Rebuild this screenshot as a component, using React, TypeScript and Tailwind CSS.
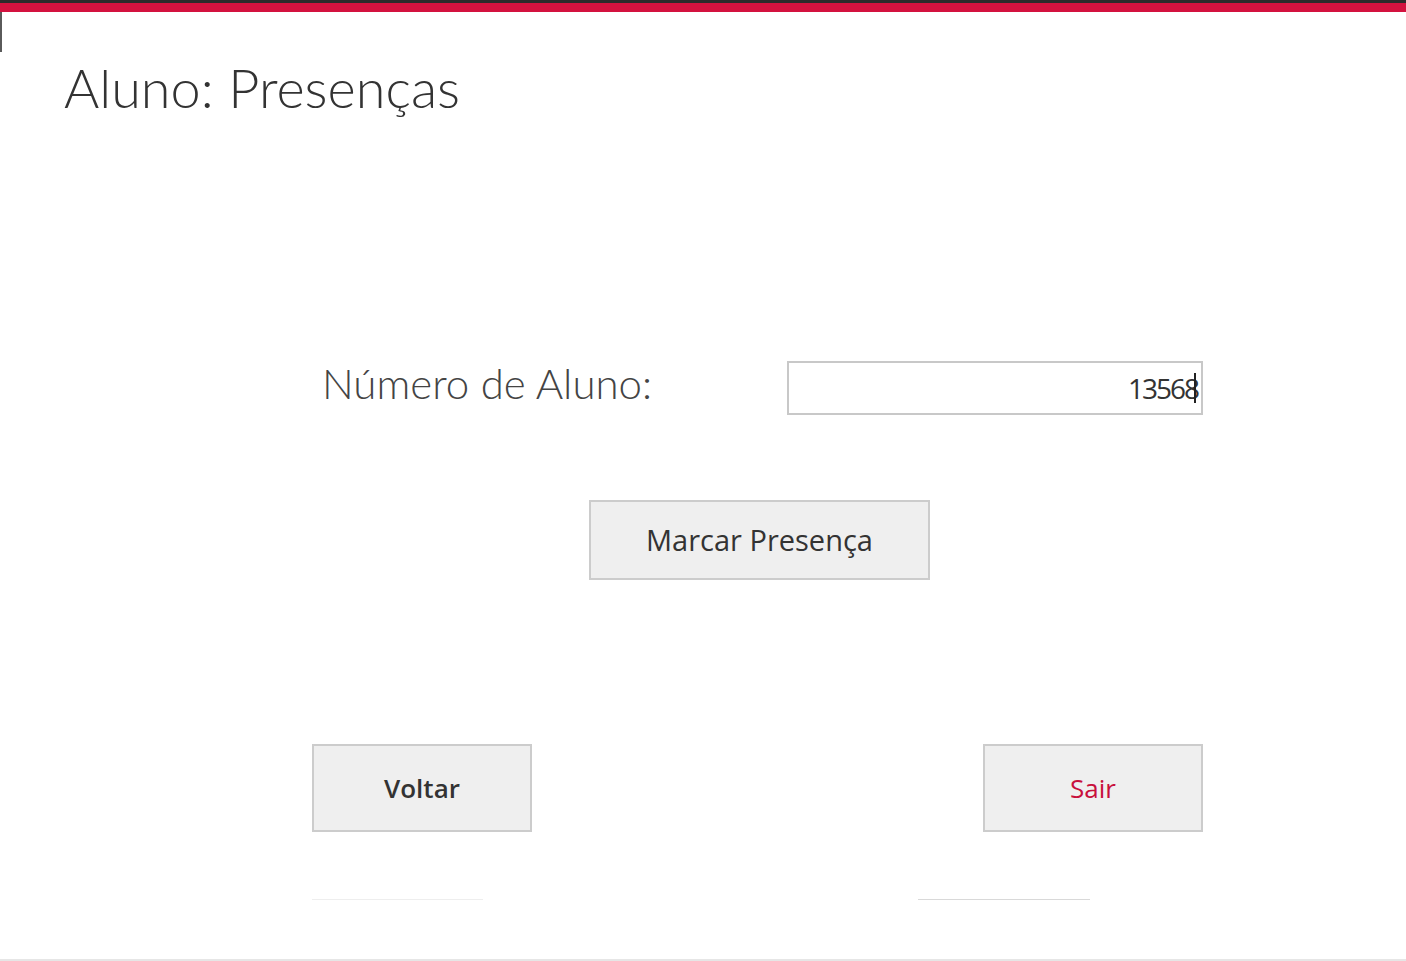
import React from "react";

export default function App() {
  return (
    <div className="w-full h-[961px] bg-white flex flex-col overflow-hidden">
      <div className="h-[3px] bg-[#2b2b2b]" />
      <div className="h-[9px] bg-[#d3123f]" />
      <div className="flex items-start">
        <div className="w-[2px] h-[40px] bg-[#5a5a5a]" />
        <h1
          className="ml-[62px] mt-[48px] text-[54px] leading-[56px] font-light text-[#333333]"
          style={{ fontFamily: "Lato, 'Open Sans', sans-serif" }}
        >
          Aluno: Presenças
        </h1>
      </div>

      <div className="flex items-start ml-[322px] mt-[245px]">
        <div
          className="w-[465px] h-[54px] text-[42px] leading-[44px] font-light text-[#444444]"
          style={{ fontFamily: "Lato, 'Open Sans', sans-serif" }}
        >
          Número de Aluno:
        </div>
        <div className="w-[416px] h-[54px] border-2 border-[#c8c8c8] bg-white flex items-center justify-end pr-[5px]">
          <span
            className="text-[28px] tracking-[-2px] text-[#333333] leading-none"
            style={{ fontFamily: "'Open Sans', sans-serif" }}
          >
            13568
          </span>
          <span className="w-[2px] h-[30px] bg-[#222222] ml-[-4px]" />
        </div>
      </div>

      <div className="ml-[589px] mt-[85px]">
        <button
          className="w-[341px] h-[80px] bg-[#efefef] border-2 border-[#cccccc] text-[29px] font-medium text-[#333333] flex items-center justify-center"
          style={{ fontFamily: "'Open Sans', sans-serif" }}
        >
          Marcar Presença
        </button>
      </div>

      <div className="flex ml-[312px] mt-[164px] gap-[451px]">
        <button
          className="w-[220px] h-[88px] bg-[#efefef] border-2 border-[#cccccc] text-[26px] font-semibold text-[#333333] flex items-center justify-center"
          style={{ fontFamily: "'Open Sans', sans-serif" }}
        >
          Voltar
        </button>
        <button
          className="w-[220px] h-[88px] bg-[#efefef] border-2 border-[#cccccc] text-[26px] font-medium text-[#c8103c] flex items-center justify-center"
          style={{ fontFamily: "'Open Sans', sans-serif" }}
        >
          Sair
        </button>
      </div>

      <div className="flex ml-[312px] mt-[67px]">
        <div className="w-[171px] h-[1px] bg-[#eeeeee]" />
        <div className="w-[172px] h-[1px] bg-[#d9d9d9] ml-[435px]" />
      </div>

      <div className="flex-1" />
      <div className="h-[2px] bg-[#e6e6e6]" />
    </div>
  );
}
